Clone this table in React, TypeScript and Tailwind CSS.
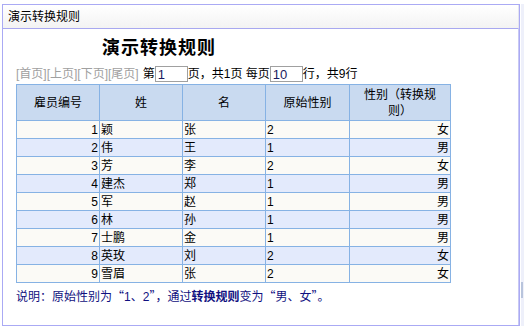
import React from "react";

const rows = [
  { id: 1, first: "颖", last: "张", raw: "2", sex: "女" },
  { id: 2, first: "伟", last: "王", raw: "1", sex: "男" },
  { id: 3, first: "芳", last: "李", raw: "2", sex: "女" },
  { id: 4, first: "建杰", last: "郑", raw: "1", sex: "男" },
  { id: 5, first: "军", last: "赵", raw: "1", sex: "男" },
  { id: 6, first: "林", last: "孙", raw: "1", sex: "男" },
  { id: 7, first: "士鹏", last: "金", raw: "1", sex: "男" },
  { id: 8, first: "英玫", last: "刘", raw: "2", sex: "女" },
  { id: 9, first: "雪眉", last: "张", raw: "2", sex: "女" },
];

const cjk = { fontFamily: '"Noto Sans CJK SC", sans-serif' };

export default function App() {
  return (
    <div
      className="w-[524px] h-[328px] bg-white overflow-hidden flex text-[12px] text-black"
      style={{ fontFamily: '"Liberation Sans", "Noto Sans CJK SC", sans-serif' }}
    >
      <div className="ml-[2px] mt-[4px] w-[518px] h-[322px] border border-[#aaaaf4] flex flex-col">
        <div className="h-[24px] shrink-0 border-b border-[#a8a8f0] bg-gradient-to-b from-white to-[#f3f3f3] flex items-center pl-[5px] leading-[16px] border-r border-r-[#e4e4f0]">
          演示转换规则
        </div>
        <div className="flex-1 border-r border-[#c8c8f4] pl-[13px]">
          <div className="mt-[8px] ml-[86px] text-[18px] font-bold leading-[22px] tracking-[1px]">
            演示转换规则
          </div>
          <div className="mt-[6px] flex items-center h-[18px] leading-[16px]">
            <span className="text-[#a0a0a0]">[首页][上页][下页][尾页]</span>
            <span className="ml-[4px]">第</span>
            <span className="w-[33px] h-[16px] border border-[#a0a0a0] text-[#1a1a60] leading-[16px] pl-[2px] text-[13px]">1</span>
            <span>页，共1页 每页</span>
            <span className="w-[33px] h-[16px] border border-[#a0a0a0] text-[#1a1a60] leading-[16px] pl-[2px] text-[13px]">10</span>
            <span>行，共9行</span>
          </div>
          <table className="mt-[1px] table-fixed border-collapse w-[434px]">
            <colgroup>
              <col className="w-[83px]" />
              <col className="w-[83px]" />
              <col className="w-[83px]" />
              <col className="w-[84px]" />
              <col className="w-[101px]" />
            </colgroup>
            <thead>
              <tr className="h-[36px] bg-[#c9daf0]">
                <th className="border border-[#86b2e4] font-normal leading-[16px] p-0">雇员编号</th>
                <th className="border border-[#86b2e4] font-normal leading-[16px] p-0">姓</th>
                <th className="border border-[#86b2e4] font-normal leading-[16px] p-0">名</th>
                <th className="border border-[#86b2e4] font-normal leading-[16px] p-0">原始性别</th>
                <th className="border border-[#86b2e4] font-normal leading-[16px] px-[8px] py-0">性别（转换规则）</th>
              </tr>
            </thead>
            <tbody>
              {rows.map((r, i) => (
                <tr key={r.id} className={i % 2 === 0 ? "h-[18px] bg-[#fbfaf6]" : "h-[18px] bg-[#e3eafc]"}>
                  <td className="border border-[#86b2e4] text-right pr-[1px] leading-[16px] p-0">{r.id}</td>
                  <td className="border border-[#86b2e4] pl-[1px] leading-[16px] p-0">{r.first}</td>
                  <td className="border border-[#86b2e4] pl-[1px] leading-[16px] p-0">{r.last}</td>
                  <td className="border border-[#86b2e4] pl-[1px] leading-[16px] p-0">{r.raw}</td>
                  <td className="border border-[#86b2e4] text-right pr-[1px] leading-[16px] p-0">{r.sex}</td>
                </tr>
              ))}
            </tbody>
          </table>
          <div className="mt-[5px] text-[#101080] leading-[16px]">
            说明：原始性别为<span style={cjk}>“</span>1、2<span style={cjk}>”</span>，通过<span className="font-bold">转换规则</span>变为<span style={cjk}>“</span>男、女<span style={cjk}>”</span>。
          </div>
        </div>
      </div>
      <div className="ml-[1px] mt-[4px] w-[3px] h-[322px] bg-[#eef0fa] flex flex-col">
        <div className="mt-[278px] h-[16px] w-[2px] bg-[#b8c4dc]" />
      </div>
    </div>
  );
}
